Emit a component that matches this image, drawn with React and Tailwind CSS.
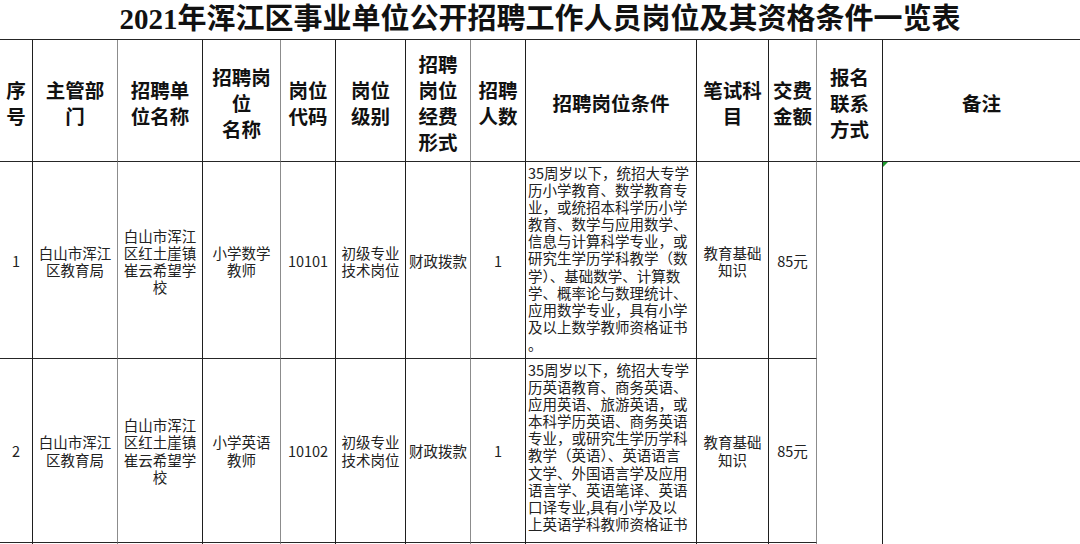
// App.jsx

// ======= Spaltenlinien (rechte Kante je Spalte) =======
const DARK = 'border-r border-r-[#1f1f1f]';
const GRAY = 'border-r border-r-[#8c8c8c]';
const lines = [DARK, GRAY, DARK, GRAY, DARK, DARK, GRAY, DARK, DARK, DARK, GRAY, DARK, ''];

const heads = [
  ['序', '号'],
  ['主管部', '门'],
  ['招聘单', '位名称'],
  ['招聘岗', '位', '名称'],
  ['岗位', '代码'],
  ['岗位', '级别'],
  ['招聘', '岗位', '经费', '形式'],
  ['招聘', '人数'],
  ['招聘岗位条件'],
  ['笔试科', '目'],
  ['交费', '金额'],
  ['报名', '联系', '方式'],
  ['备注'],
];

const rows = [
  {
    no: '1',
    pad: 'pt-[2px]',
    cells: [
      ['白山市浑江', '区教育局'],
      ['白山市浑江', '区红土崖镇', '崔云希望学', '校'],
      ['小学数学', '教师'],
      ['10101'],
      ['初级专业', '技术岗位'],
      ['财政拨款'],
      ['1'],
    ],
    cond: [
      '35周岁以下，统招大专学',
      '历小学教育、数学教育专',
      '业，或统招本科学历小学',
      '教育、数学与应用数学、',
      '信息与计算科学专业，或',
      '研究生学历学科教学（数',
      '学）、基础数学、计算数',
      '学、概率论与数理统计、',
      '应用数学专业，具有小学',
      '及以上数学教师资格证书',
      '。',
    ],
  },
  {
    no: '2',
    pad: 'pt-0',
    cells: [
      ['白山市浑江', '区教育局'],
      ['白山市浑江', '区红土崖镇', '崔云希望学', '校'],
      ['小学英语', '教师'],
      ['10102'],
      ['初级专业', '技术岗位'],
      ['财政拨款'],
      ['1'],
    ],
    cond: [
      '35周岁以下，统招大专学',
      '历英语教育、商务英语、',
      '应用英语、旅游英语，或',
      '本科学历英语、商务英语',
      '专业，或研究生学历学科',
      '教学（英语）、英语语言',
      '文学、外国语言学及应用',
      '语言学、英语笔译、英语',
      '口译专业,具有小学及以',
      '上英语学科教师资格证书',
      '。',
    ],
  },
];

const bodyFont = { fontFamily: '"Noto Sans CJK SC", "Liberation Sans", sans-serif' };

// mehrzeiliger Text als ein Element
function Lines({ items, className = '' }) {
  return (
    <p className={`whitespace-nowrap ${className}`}>
      {items.map((t, i) => (
        <span key={i}>
          {i > 0 && <br />}
          {t}
        </span>
      ))}
    </p>
  );
}

function Cell({ col, children, className = '' }) {
  return (
    <div className={`${lines[col]} border-b border-b-[#262626] ${className}`}>
      {children}
    </div>
  );
}

function Centered({ col, textLines, pad }) {
  return (
    <Cell col={col} className={`flex items-center justify-center text-center ${pad}`}>
      <Lines items={textLines} />
    </Cell>
  );
}

export default function App() {
  return (
    <div className="w-[1080px] h-[544px] overflow-hidden bg-white text-[#111]">
      {/* ======= Titel ======= */}
      <h1
        className="h-[39px] flex items-center justify-center text-[29px] font-bold leading-none"
        style={{ fontFamily: '"Liberation Serif", "Noto Sans CJK SC", serif' }}
      >
        2021年浑江区事业单位公开招聘工作人员岗位及其资格条件一览表
      </h1>

      {/* ======= Tabelle ======= */}
      <div
        className="grid grid-cols-[33px_85px_85px_78px_55px_70px_65px_55px_171px_72px_48px_66px_197px] grid-rows-[122px_197px_184px_40px] border-t border-t-[#262626]"
        style={bodyFont}
      >
        {/* Kopfzeile */}
        {heads.map((h, i) => (
          <Cell
            key={i}
            col={i}
            className="flex items-center justify-center pt-[4px] text-[19.5px] leading-[26px] font-bold text-center"
          >
            <Lines items={h} />
          </Cell>
        ))}

        {/* Datenzeilen */}
        {rows.map((r, ri) => (
          <div key={ri} className="contents text-[14.5px] leading-[17.1px] text-[#222]">
            <Centered col={0} textLines={[r.no]} pad={r.pad} />
            {r.cells.map((c, ci) => (
              <Centered key={ci} col={ci + 1} textLines={c} pad={r.pad} />
            ))}
            <Cell col={8} className="pl-[2px] pt-[2px] text-left">
              <Lines items={r.cond} />
            </Cell>
            <Centered col={9} textLines={['教育基础', '知识']} pad={r.pad} />
            <Centered col={10} textLines={['85元']} pad={r.pad} />
            {ri === 0 && (
              <>
                <div className={`${lines[11]} row-span-3`} />
                <div className="row-span-3 relative">
                  {/* grünes Fehlerdreieck */}
                  <div className="absolute top-0 left-0 w-0 h-0 border-t-[5px] border-t-[#1f9a2e] border-r-[5px] border-r-transparent" />
                </div>
              </>
            )}
          </div>
        ))}

        {/* angeschnittene dritte Zeile */}
        {Array.from({ length: 11 }).map((_, i) => (
          <div key={i} className={lines[i]} />
        ))}
      </div>
    </div>
  );
}
